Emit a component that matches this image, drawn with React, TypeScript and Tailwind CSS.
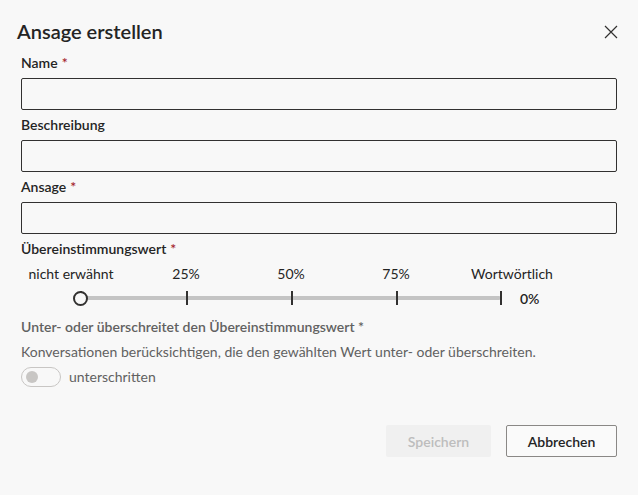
import React from 'react';

const font = { fontFamily: 'Lato, "Noto Sans", sans-serif' };

type FieldProps = { label: string; required?: boolean };

const Field = ({ label, required }: FieldProps) => (
	<div className="flex flex-col">
		<label className="py-[5px] text-[14px] leading-[20px] font-semibold text-[#242424]">
			{label}
			{required && <span className="text-[#a4262c] pl-1">*</span>}
		</label>
		<input className="h-[32px] w-full rounded-[2px] border border-[#323130] bg-[#f8f8f8] px-2 text-[14px] outline-none" />
	</div>
);

const ticks = [
	{ left: 71, label: 'nicht erwähnt' },
	{ left: 186, label: '25%' },
	{ left: 291, label: '50%' },
	{ left: 396, label: '75%' },
	{ left: 512, label: 'Wortwörtlich' },
];

const MatchSlider = () => (
	<div className="relative h-[48px] w-full">
		{ticks.map((t) => (
			<span
				key={t.label}
				className="absolute top-0 -translate-x-1/2 whitespace-nowrap text-[14px] leading-[20px] text-[#242424]"
				style={{ left: t.left - 21 }}
			>
				{t.label}
			</span>
		))}
		<div className="absolute left-[60px] top-[32px] h-[4px] w-[420px] rounded-full bg-[#c4c4c4]" />
		{[59, 165, 270, 375, 479].map((x) => (
			<div
				key={x}
				className="absolute top-[27px] h-[14px] w-[1.5px] bg-[#323130]"
				style={{ left: x }}
			/>
		))}
		<div className="absolute left-[52px] top-[27px] h-[15px] w-[15px] rounded-full border-2 border-[#323130] bg-[#f8f8f8]" />
		<span className="absolute left-[499px] top-[25px] text-[14px] leading-[20px] font-semibold text-[#242424]">
			0%
		</span>
	</div>
);

export default function App() {
	return (
		<div className="h-[495px] w-[638px] bg-[#f8f8f8] text-[#242424]" style={font}>
			<div className="flex items-center justify-between pl-[17px] pr-[20px] pt-[17px]">
				<h1 className="text-[20px] leading-[28px] font-semibold">Ansage erstellen</h1>
				<svg width="14" height="14" viewBox="0 0 14 14" className="mt-[2px]">
					<path d="M1 1 L13 13 M13 1 L1 13" stroke="#323130" strokeWidth="1.2" />
				</svg>
			</div>
			<div className="flex flex-col px-[21px] pt-[3px]">
				<Field label="Name" required />
				<Field label="Beschreibung" />
				<Field label="Ansage" required />
				<label className="py-[5px] text-[14px] leading-[20px] font-semibold">
					Übereinstimmungswert<span className="text-[#a4262c] pl-1">*</span>
				</label>
				<MatchSlider />
				<div className="pt-[5px] text-[14px] leading-[20px] font-semibold text-[#616161]">
					Unter- oder überschreitet den Übereinstimmungswert *
				</div>
				<div className="pt-[5px] text-[14px] leading-[20px] text-[#616161]">
					Konversationen berücksichtigen, die den gewählten Wert unter- oder überschreiten.
				</div>
				<div className="flex items-center gap-2 pt-[5px]">
					<div className="flex h-[20px] w-[40px] items-center rounded-full border border-[#c8c6c4] px-[4px]">
						<div className="h-[12px] w-[12px] rounded-full bg-[#c8c6c4]" />
					</div>
					<span className="text-[14px] leading-[20px] text-[#616161]">unterschritten</span>
				</div>
				<div className="flex justify-end gap-[15px] pt-[38px]">
					<button className="h-[32px] w-[105px] rounded-[2px] bg-[#f0f0f0] text-[14px] font-semibold text-[#bdbdbd]">
						Speichern
					</button>
					<button className="h-[32px] w-[111px] rounded-[2px] border border-[#8a8886] bg-[#fafafa] text-[14px] font-semibold text-[#242424]">
						Abbrechen
					</button>
				</div>
			</div>
		</div>
	);
}
